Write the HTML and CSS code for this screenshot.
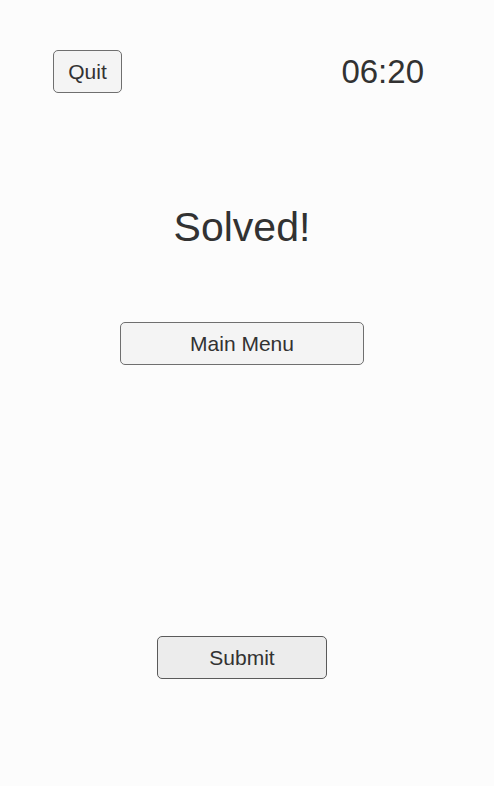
FILE: index.html
```html
<!DOCTYPE html>
<html>
<head>
<meta charset="utf-8">
<link rel="stylesheet" href="styles.css">
</head>
<body>
<div class="screen">
  <div class="topbar">
    <button class="btn btn-quit">Quit</button>
    <div class="timer">06:20</div>
  </div>
  <h1 class="title">Solved!</h1>
  <button class="btn btn-menu">Main Menu</button>
  <button class="btn btn-submit">Submit</button>
</div>
</body>
</html>
```
FILE: styles.css
```css
html, body {
  margin: 0;
  padding: 0;
  background: #fcfcfc;
}
.screen {
  width: 484px;
  height: 786px;
  display: flex;
  flex-direction: column;
  align-items: center;
  font-family: "Liberation Sans", Arial, sans-serif;
  color: #323232;
}
.topbar {
  align-self: stretch;
  display: flex;
  justify-content: space-between;
  align-items: center;
  padding: 50px 60px 0 53px;
  height: 43px;
}
.btn {
  font-family: "Liberation Sans", Arial, sans-serif;
  color: #323232;
  font-size: 21px;
  border: 1px solid #6f6f6f;
  border-radius: 5px;
  background: #f4f4f4;
  padding: 0;
  box-sizing: border-box;
  height: 43px;
}
.btn-quit {
  width: 69px;
}
.timer {
  font-size: 33px;
  line-height: 43px;
}
.title {
  margin: 0;
  margin-top: 109px;
  font-weight: normal;
  font-size: 41px;
  line-height: 50px;
}
.btn-menu {
  width: 244px;
  margin-top: 70px;
}
.btn-submit {
  width: 170px;
  margin-top: 271px;
  background: #ececec;
  border-color: #5a5a5a;
}
```
